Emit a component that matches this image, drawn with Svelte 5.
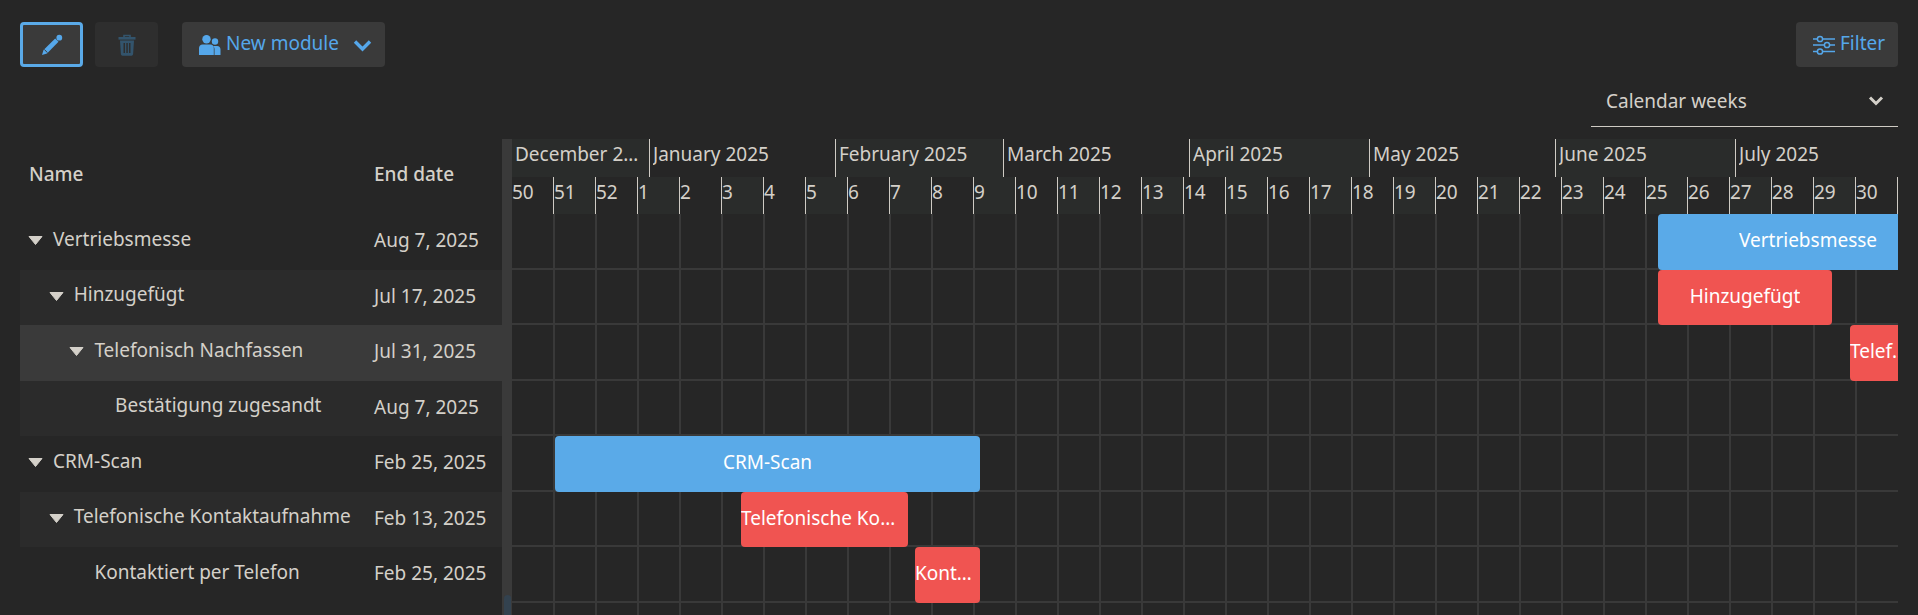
<script lang="ts">
	interface Task {
		name: string;
		end: string;
		level: number;
		parent: boolean;
		tone: string;
	}

	interface Bar {
		row: number;
		left: number;
		width: number;
		label: string;
		kind: string;
		tight?: boolean;
	}

	const tasks: Task[] = [
		{ name: 'Vertriebsmesse', end: 'Aug 7, 2025', level: 0, parent: true, tone: '' },
		{ name: 'Hinzugefügt', end: 'Jul 17, 2025', level: 1, parent: true, tone: 'alt' },
		{ name: 'Telefonisch Nachfassen', end: 'Jul 31, 2025', level: 2, parent: true, tone: 'selected' },
		{ name: 'Bestätigung zugesandt', end: 'Aug 7, 2025', level: 3, parent: false, tone: 'alt' },
		{ name: 'CRM-Scan', end: 'Feb 25, 2025', level: 0, parent: true, tone: '' },
		{ name: 'Telefonische Kontaktaufnahme', end: 'Feb 13, 2025', level: 1, parent: true, tone: 'alt' },
		{ name: 'Kontaktiert per Telefon', end: 'Feb 25, 2025', level: 2, parent: false, tone: '' }
	];

	const months = [
		{ label: 'December 2024', width: 138 },
		{ label: 'January 2025', width: 186 },
		{ label: 'February 2025', width: 168 },
		{ label: 'March 2025', width: 186 },
		{ label: 'April 2025', width: 180 },
		{ label: 'May 2025', width: 186 },
		{ label: 'June 2025', width: 180 },
		{ label: 'July 2025', width: 162 }
	];

	const weeks = [50, 51, 52, ...Array.from({ length: 30 }, (_, i) => i + 1)];

	const bars: Bar[] = [
		{ row: 0, left: 1146, width: 300, label: 'Vertriebsmesse', kind: 'blue' },
		{ row: 1, left: 1146, width: 174, label: 'Hinzugefügt', kind: 'red' },
		{ row: 2, left: 1338, width: 66, label: 'Telefonisch Nachfassen', kind: 'red' },
		{ row: 4, left: 43, width: 425, label: 'CRM-Scan', kind: 'blue' },
		{ row: 5, left: 229, width: 167, label: 'Telefonische Kontaktaufnahme', kind: 'red', tight: true },
		{ row: 6, left: 403, width: 65, label: 'Kontaktiert per Telefon', kind: 'red' }
	];

	const rowHeight = 55.5;
</script>

<div class="page">
	<div class="toolbar">
		<button class="btn square active" aria-label="Edit">
			<svg width="22" height="22" viewBox="0 0 22 22">
				<path d="M1 21l1.500-5L14.200 4.500l3.300 3.300L6 19.500z" fill="currentColor" />
				<path d="M3.300 15.500l3.200 3.200" stroke="#3a3a3a" stroke-width="1" />
				<circle cx="18.300" cy="3.700" r="2.900" fill="currentColor" />
			</svg>
		</button>
		<button class="btn square disabled" aria-label="Delete">
			<svg width="18" height="22" viewBox="0 0 18 22">
				<path d="M6 3V1.500h6V3" fill="none" stroke="currentColor" stroke-width="1.600" />
				<path d="M0.500 3h17v2.600H.5z" fill="currentColor" />
				<path fill-rule="evenodd" d="M2 6.500h14l-.9 13.800a1.600 1.600 0 0 1-1.600 1.400H4.500a1.600 1.600 0 0 1-1.600-1.400zM5.500 9v10H7V9zM8.300 9v10h1.500V9zM11 9v10h1.500V9z" fill="currentColor" />
			</svg>
		</button>
		<button class="btn module">
			<svg width="22" height="22" viewBox="0 0 22 22">
				<circle cx="16" cy="7.500" r="3.200" fill="currentColor" />
				<path d="M14 12h4.200c2 0 3.300 1.500 3.300 3.400V21h-6v-6c0-1.200-.6-2.200-1.500-3z" fill="currentColor" />
				<circle cx="7.500" cy="5.200" r="4.200" fill="currentColor" />
				<path d="M3.500 10.500h8c2 0 3.300 1.600 3.300 3.600V21H0v-6.900c0-2 1.500-3.600 3.500-3.600z" fill="currentColor" />
			</svg>
			<span class="btn-label">New module</span>
			<svg class="chev" width="19" height="13" viewBox="0 0 19 13">
				<path d="M2 2.500L9.500 10 17 2.500" fill="none" stroke="currentColor" stroke-width="3.400" />
			</svg>
		</button>
		<button class="btn filter">
			<svg width="22" height="22" viewBox="0 0 22 22" fill="none" stroke="currentColor" stroke-width="1.500">
				<path d="M0 5h4.500M10 5h12M0 11h11M16.500 11H22M0 17.500h4.500M10 17.500h12" />
				<circle cx="7" cy="5" r="2.600" />
				<circle cx="14" cy="11" r="2.600" />
				<circle cx="7" cy="17.500" r="2.600" />
			</svg>
			<span class="btn-label">Filter</span>
		</button>
	</div>

	<div class="view-row">
		<div class="select">
			<span>Calendar weeks</span>
			<svg width="16" height="12" viewBox="0 0 16 12">
				<path d="M2 2.500L8 8.500l6-6" fill="none" stroke="currentColor" stroke-width="3" />
			</svg>
		</div>
	</div>

	<div class="gantt">
		<div class="table">
			<div class="table-head">
				<div class="col-name">Name</div>
				<div class="col-end">End date</div>
			</div>
			{#each tasks as task}
				<div class="row {task.tone}" style="padding-left: {8 + task.level * 20.7}px">
					<div class="col-name name">
						{#if task.parent}
							<svg class="caret" width="15" height="9" viewBox="0 0 15 9">
								<path d="M1 .5h13L7.500 8.500z" fill="currentColor" stroke="currentColor" stroke-linejoin="round" />
							</svg>
						{:else}
							<span class="caret-space"></span>
						{/if}
						<span>{task.name}</span>
					</div>
					<div class="col-end end">{task.end}</div>
				</div>
			{/each}
		</div>

		<div class="splitter">
			<div class="thumb"></div>
		</div>

		<div class="timeline">
			<div class="months">
				{#each months as month, i}
					<div class="month" class:shade={i % 2 === 0} style="width: {month.width}px">
						<span>{month.label}</span>
					</div>
				{/each}
			</div>
			<div class="weeks">
				{#each weeks as week}
					<div class="week" class:shade={week % 2 === 1}>{week}</div>
				{/each}
			</div>
			<div class="body">
				{#each tasks as task}
					<div class="grid-row">
						{#each weeks as week}
							<div class="grid-cell"></div>
						{/each}
					</div>
				{/each}
				<div class="grid-row">
					{#each weeks as week}
						<div class="grid-cell"></div>
					{/each}
				</div>
				{#each bars as bar}
					<div
						class="bar {bar.kind}"
						class:tight={bar.tight}
						style="top: {bar.row * rowHeight}px; left: {bar.left}px; width: {bar.width}px; height: {rowHeight}px"
					>
						<span>{bar.label}</span>
					</div>
				{/each}
			</div>
		</div>
	</div>
</div>

<style>
	:global(body) {
		background: #262626;
	}

	.page {
		height: 615px;
		overflow: hidden;
		box-sizing: border-box;
		padding: 22px 20px 0;
		background: #262626;
		color: #d4d0c9;
		font-family: 'Noto Sans', sans-serif;
		font-size: 19px;
	}

	.toolbar {
		display: flex;
		align-items: stretch;
		height: 45px;
	}

	.btn {
		display: flex;
		align-items: center;
		justify-content: center;
		padding: 0;
		box-sizing: border-box;
		border: none;
		border-radius: 4px;
		background: #3a3a3a;
		color: #55a7ea;
		font: inherit;
	}

	.btn-label {
		margin-top: -4px;
	}

	.square {
		width: 63px;
		margin-right: 12px;
	}

	.active {
		border: 3px solid #5aaae8;
	}

	.disabled {
		background: #2e2e2e;
		color: #33546c;
	}

	.module {
		justify-content: flex-start;
		width: 203px;
		margin-left: 12px;
		padding-left: 17px;
		gap: 5px;
	}

	.chev {
		margin-left: 9px;
		margin-top: 1px;
	}

	.filter {
		justify-content: flex-start;
		width: 102px;
		margin-left: auto;
		padding-left: 17px;
		gap: 5px;
	}

	.view-row {
		display: flex;
		justify-content: flex-end;
		margin-top: 9px;
	}

	.select {
		display: flex;
		align-items: center;
		justify-content: space-between;
		box-sizing: border-box;
		width: 307px;
		height: 51px;
		padding: 0 14px 1px 15px;
		border-bottom: 1px solid #cfcbc4;
	}

	.gantt {
		display: flex;
		margin-top: 12px;
	}

	.table {
		width: 482px;
		flex: none;
	}

	.table-head {
		display: flex;
		align-items: center;
		height: 75px;
		padding-left: 9px;
		padding-bottom: 6px;
		box-sizing: border-box;
		font-weight: 500;
	}

	.table-head .col-name {
		width: 345px;
	}

	.row {
		display: flex;
		align-items: center;
		box-sizing: border-box;
		height: 55.5px;
	}

	.row.alt {
		background: #2b2b2b;
	}

	.row.selected {
		background: #3a3a3a;
	}

	.name {
		display: flex;
		flex: 1;
		align-items: center;
		gap: 10px;
		padding-bottom: 6px;
		white-space: nowrap;
	}

	.caret {
		flex: none;
		margin-top: 4px;
	}

	.caret-space {
		width: 15px;
	}

	.end {
		flex: none;
		width: 128px;
		padding-bottom: 3px;
	}

	.splitter {
		position: relative;
		width: 10px;
		flex: none;
		background: #3a3a3a;
	}

	.thumb {
		position: absolute;
		top: 456px;
		left: 2px;
		width: 7px;
		height: 40px;
		border-radius: 4px 4px 0 0;
		background: #33424f;
	}

	.timeline {
		width: 1386px;
		flex: none;
		overflow: hidden;
	}

	.months {
		display: flex;
		height: 38px;
	}

	.month {
		display: flex;
		align-items: center;
		flex: none;
		box-sizing: border-box;
		padding: 0 3px 8px;
		border-right: 1px solid #cfcbc4;
		overflow: hidden;
	}

	.month span {
		overflow: hidden;
		text-overflow: ellipsis;
		white-space: nowrap;
	}

	.month:last-child {
		border-right: none;
	}

	.shade {
		background: #2a2c2b;
	}

	.weeks {
		display: flex;
		height: 37px;
	}

	.week {
		flex: none;
		box-sizing: border-box;
		width: 42px;
		border-right: 1px solid #cfcbc4;
		line-height: 31px;
		white-space: nowrap;
	}

	.body {
		position: relative;
	}

	.grid-row {
		display: flex;
		box-sizing: border-box;
		height: 55.5px;
		border-bottom: 2px solid #393939;
	}

	.grid-cell {
		flex: none;
		width: 42px;
		box-sizing: border-box;
		border-left: 2px solid #393939;
	}

	.grid-cell:first-child {
		width: 41px;
		border-left: none;
	}

	.bar {
		position: absolute;
		display: flex;
		align-items: center;
		justify-content: center;
		box-sizing: border-box;
		padding-bottom: 3px;
		border-radius: 4px;
		color: #fff;
		overflow: hidden;
	}

	.bar span {
		overflow: hidden;
		text-overflow: ellipsis;
		white-space: nowrap;
	}

	.bar.tight {
		padding-right: 8px;
	}

	.blue {
		background: #5aaae8;
	}

	.red {
		background: #f05451;
	}
</style>
